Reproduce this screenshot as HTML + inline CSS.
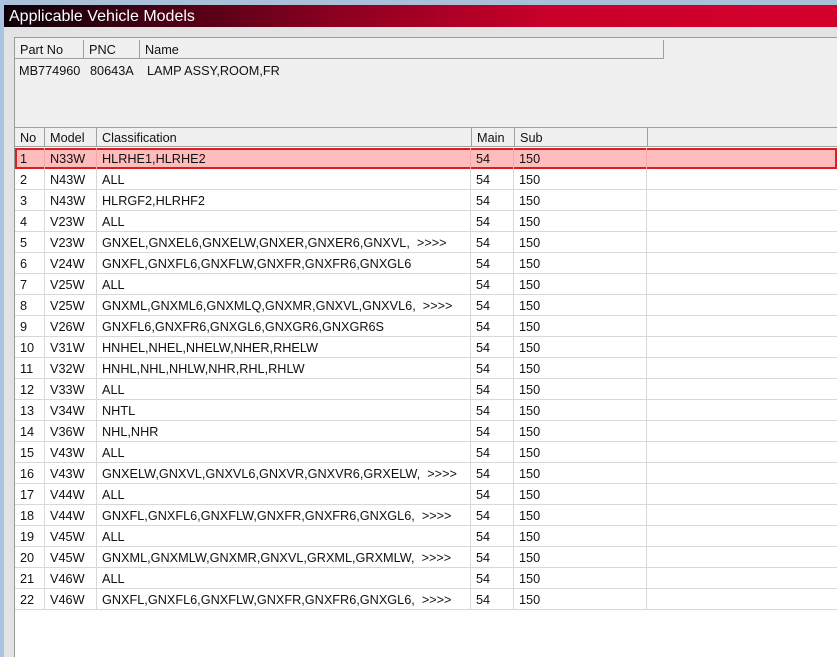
<!DOCTYPE html>
<html><head><style>
*{margin:0;padding:0;box-sizing:border-box}
body{width:837px;height:657px;overflow:hidden;background:#e3e3e3;font-family:"Liberation Sans",Arial,sans-serif;font-size:12.7px;color:#111;position:relative}
.abs{position:absolute}
#top{left:0;top:0;width:837px;height:5px;background:#aac0d8}
#lft{left:0;top:0;width:4px;height:657px;background:#a9c3e0}
#title{left:4px;top:5px;width:833px;height:22px;background:linear-gradient(90deg,#0a0008 0%,#3a0012 15%,#8c0020 40%,#c8002a 65%,#d4002c 100%);color:#fff;font-size:16px;line-height:23px;padding-left:5px}
#panel{left:14px;top:37px;width:823px;height:620px;background:#f0f0f0;border-left:1px solid #9a9a9a;border-top:1px solid #9a9a9a}
.h{position:absolute;height:19px;line-height:20px;background:#f0f0f0;border-right:1px solid #a0a0a0;border-bottom:1px solid #a0a0a0;padding-left:5px}
#grid{left:15px;top:147px;width:822px;height:510px;background:#fff}
.r{position:absolute;left:15px;width:822px;height:21px;line-height:22px;border-bottom:1px solid #d8d8d8}
.r span{position:absolute;top:0;height:21px;border-right:1px solid #d8d8d8;padding-left:5px;white-space:nowrap}
.c1{left:0;width:30px}.c2{left:30px;width:52px}.c3{left:82px;width:374px}.c4{left:456px;width:43px}.c5{left:499px;width:133px}
.sel{background:#ffbcbc;border:2px solid #d81e1e;height:21px}
.r.s span{border-right-color:#f0a8a8}
</style></head><body>
<div id="top" class="abs"></div>
<div id="lft" class="abs"></div>
<div id="title" class="abs">Applicable Vehicle Models</div>
<div id="panel" class="abs"></div>
<div class="abs" style="left:15px;top:40px;width:648px;height:19px;background:#f0f0f0;border-top:1px solid #d0d0d0"></div>
<div class="h" style="left:15px;top:40px;width:69px">Part No</div>
<div class="h" style="left:84px;top:40px;width:56px">PNC</div>
<div class="h" style="left:140px;top:40px;width:524px">Name</div>
<div class="abs" style="left:19px;top:63px;line-height:16px">MB774960</div>
<div class="abs" style="left:90px;top:63px;line-height:16px">80643A</div>
<div class="abs" style="left:147px;top:63px;line-height:16px">LAMP ASSY,ROOM,FR</div>
<div class="abs" style="left:15px;top:127px;width:822px;height:1px;background:#a0a0a0"></div>
<div class="h" style="left:15px;top:128px;width:30px">No</div>
<div class="h" style="left:45px;top:128px;width:52px">Model</div>
<div class="h" style="left:97px;top:128px;width:375px">Classification</div>
<div class="h" style="left:472px;top:128px;width:43px">Main</div>
<div class="h" style="left:515px;top:128px;width:133px">Sub</div>
<div class="h" style="left:648px;top:128px;width:189px;border-right:none"></div>
<div id="grid" class="abs"></div>
<div class="r sel" style="top:148px"></div>
<div id="rows"></div>
<script>
var d=[["N33W","HLRHE1,HLRHE2"],["N43W","ALL"],["N43W","HLRGF2,HLRHF2"],["V23W","ALL"],["V23W","GNXEL,GNXEL6,GNXELW,GNXER,GNXER6,GNXVL,  >>>>"],["V24W","GNXFL,GNXFL6,GNXFLW,GNXFR,GNXFR6,GNXGL6"],["V25W","ALL"],["V25W","GNXML,GNXML6,GNXMLQ,GNXMR,GNXVL,GNXVL6,  >>>>"],["V26W","GNXFL6,GNXFR6,GNXGL6,GNXGR6,GNXGR6S"],["V31W","HNHEL,NHEL,NHELW,NHER,RHELW"],["V32W","HNHL,NHL,NHLW,NHR,RHL,RHLW"],["V33W","ALL"],["V34W","NHTL"],["V36W","NHL,NHR"],["V43W","ALL"],["V43W","GNXELW,GNXVL,GNXVL6,GNXVR,GNXVR6,GRXELW,  >>>>"],["V44W","ALL"],["V44W","GNXFL,GNXFL6,GNXFLW,GNXFR,GNXFR6,GNXGL6,  >>>>"],["V45W","ALL"],["V45W","GNXML,GNXMLW,GNXMR,GNXVL,GRXML,GRXMLW,  >>>>"],["V46W","ALL"],["V46W","GNXFL,GNXFL6,GNXFLW,GNXFR,GNXFR6,GNXGL6,  >>>>"]];
var h="";d.forEach(function(x,i){h+='<div class="r'+(i==0?' s':'')+'" style="top:'+(148+i*21)+'px'+(i==0?';border-bottom:none':'')+'"><span class="c1">'+(i+1)+'</span><span class="c2">'+x[0]+'</span><span class="c3">'+x[1].replace(/ /g,"&nbsp;")+'</span><span class="c4">54</span><span class="c5">150</span></div>';});
document.getElementById("rows").innerHTML=h;
</script>
</body></html>
